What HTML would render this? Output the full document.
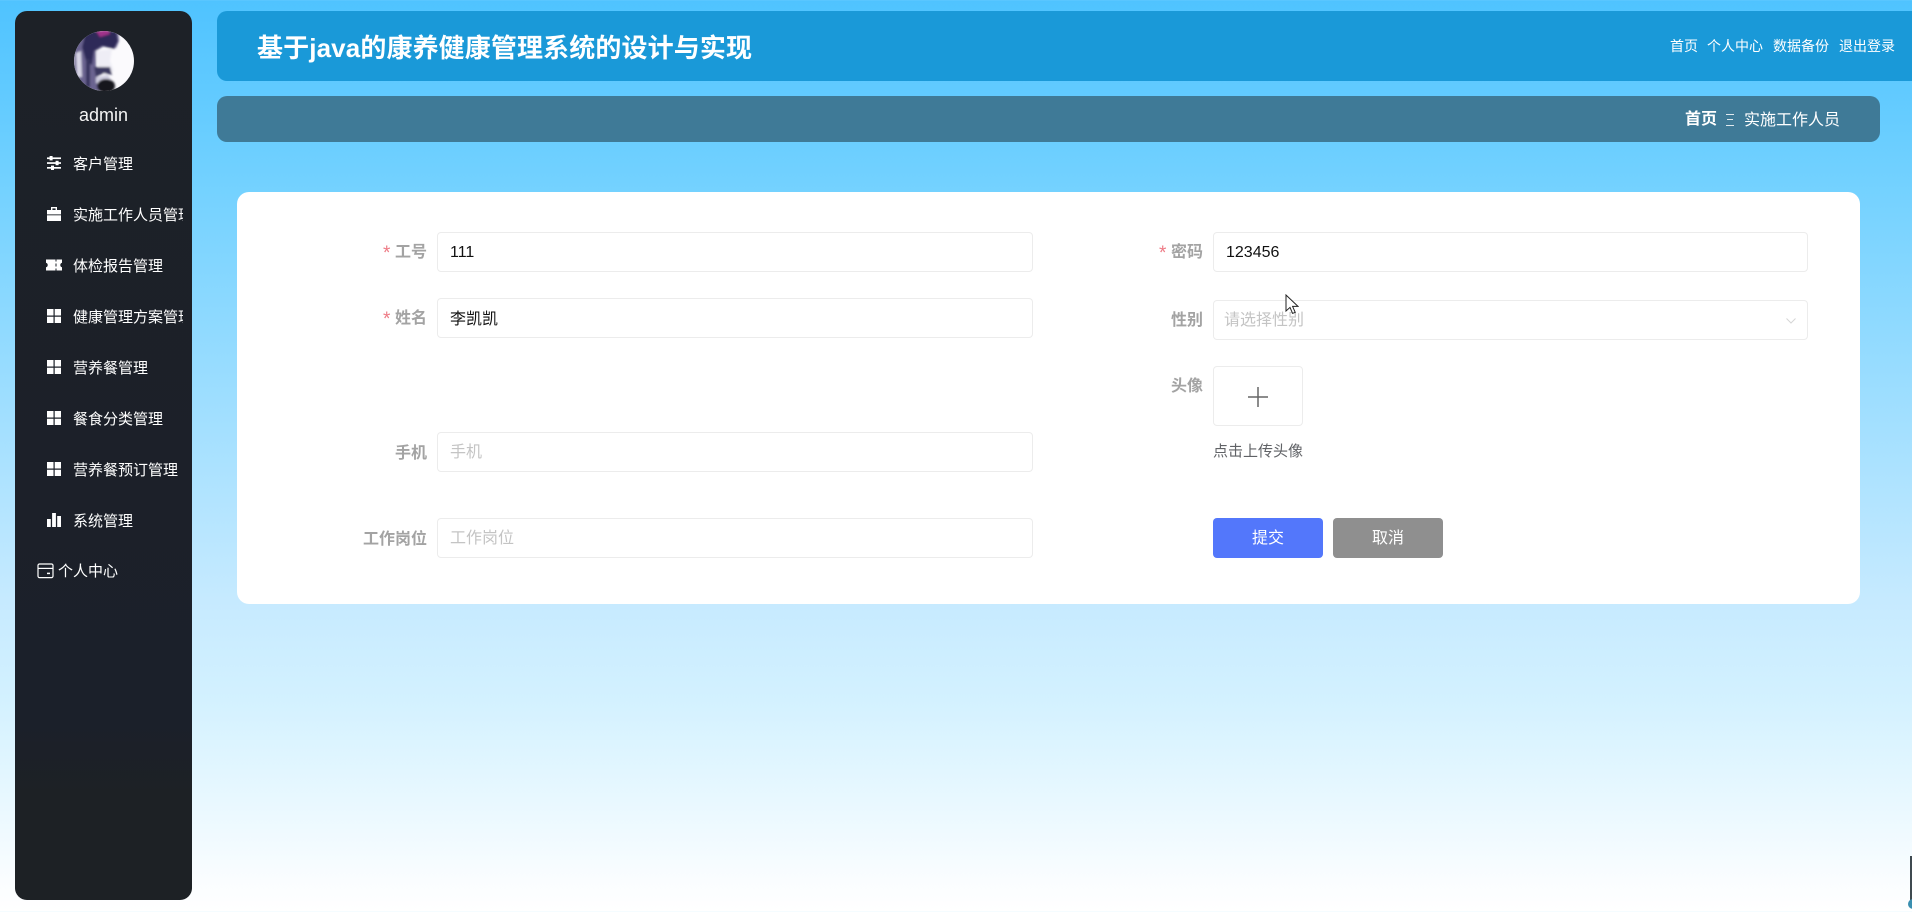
<!DOCTYPE html>
<html lang="zh-CN">
<head>
<meta charset="utf-8">
<title>基于java的康养健康管理系统的设计与实现</title>
<style>
html,body{margin:0;padding:0;width:1912px;height:912px;overflow:hidden;}
body{position:relative;background:linear-gradient(180deg,#4fc3ff 0,#72d1ff 180px,#c6eaff 600px,#d3f1ff 700px,#e8f8ff 800px,#fafdff 880px,#fff 912px);font-family:"Liberation Sans","Noto Sans CJK SC",sans-serif;}
.a{position:absolute;white-space:nowrap;}
#side{left:15px;top:11px;width:177px;height:889px;background:linear-gradient(180deg,#1d2127 0,#1b202a 80%,#1d2125 88%,#1d2125 100%);border-radius:12px;}
.m{position:absolute;left:73px;width:110px;overflow:hidden;color:#fff;font-size:15px;line-height:22px;height:22px;white-space:nowrap;}
.i{position:absolute;left:46px;width:16px;height:16px;}
#hd{left:217px;top:11px;width:1695px;height:70px;background:#1a99d8;border-radius:10px 0 0 10px;}
#bc{left:217px;top:96px;width:1663px;height:46px;background:#3f7a97;border-radius:10px;}
.t{color:#fff;font-size:14px;line-height:20px;top:36px;}
#card{left:237px;top:192px;width:1623px;height:412px;background:#fff;border-radius:12px;}
.l{color:#a3a3a3;font-size:16px;font-weight:bold;line-height:24px;text-align:right;}
.s{color:#ee7a85;font-size:19px;line-height:24px;}
.f{box-sizing:border-box;background:#fff;border:1px solid #ececec;border-radius:4px;height:40px;font-size:16px;line-height:39px;padding-left:12px;color:#111;}
.p{color:#c4c4c4;line-height:40px;}
.b{width:110px;height:40px;border-radius:4px;color:#fff;font-size:16px;line-height:42px;text-align:center;}
</style>
</head>
<body>
<div class="a" id="side"></div>
<svg class="a" style="left:74px;top:31px" width="60" height="60" viewBox="0 0 60 60">
<defs>
<clipPath id="c"><circle cx="30" cy="30" r="30"/></clipPath>
<filter id="bl"><feGaussianBlur stdDeviation="1.1"/></filter>
</defs>
<g clip-path="url(#c)">
<rect width="60" height="60" fill="#fbfafd"/>
<g filter="url(#bl)">
<path d="M0 0H44L45 10 42 17 30 15 22 20 22 36 26 60H0Z" fill="#6a6490"/>
<path d="M12 0H42L44 10 40 18 28 15 20 20 18 34 12 30 8 16Z" fill="#2f2a58"/>
<path d="M22 0 l12 -1 2 4 -10 3Z" fill="#a0308a"/>
<path d="M2 22l5 -2 1 26 -5 0Z" fill="#d8d6e6"/>
<path d="M12 28l4 0 0 28 -4 0Z" fill="#38345e"/>
<path d="M22 20 L38 18 36 30 40 40 30 44 24 36Z" fill="#eeedf5"/>
<path d="M20 36 L36 36 38 44 30 42 22 46Z" fill="#3a3960"/>
<path d="M22 46 L34 44 38 50 28 54 22 52Z" fill="#cfcde0"/>
<ellipse cx="32" cy="55" rx="9" ry="7" fill="#14141e"/>
</g>
</g>
</svg>
<div class="a" style="left:15px;width:177px;top:103px;text-align:center;color:#f4f4f4;font-size:18px;line-height:24px;">admin</div>

<svg class="i" style="top:155px" viewBox="0 0 16 16" fill="#fff"><rect x="1" y="2.4" width="14" height="1.7"/><rect x="1" y="7.2" width="14" height="1.7"/><rect x="1" y="12" width="14" height="1.7"/><rect x="3.6" y="1" width="3" height="4.4"/><rect x="9.6" y="5.8" width="3" height="4.4"/><rect x="5" y="10.6" width="3" height="4.4"/></svg>
<div class="m" style="top:154px">客户管理</div>
<svg class="i" style="top:206px" viewBox="0 0 16 16" fill="#fff"><path d="M5 1h6v3H9.6V2.4H6.4V4H5Z"/><rect x="1" y="4" width="14" height="4.4"/><rect x="1" y="9.3" width="14" height="5.7"/></svg>
<div class="m" style="top:205px">实施工作人员管理</div>
<svg class="i" style="top:257px" viewBox="0 0 16 16" fill="#fff"><path d="M0 2.5h9.5v2h1v-2H16v3.2a2.4 2.4 0 0 0 0 4.6v3.2h-5.5v-2h-1v2H0v-3.2a2.4 2.4 0 0 0 0-4.6ZM9.5 6.5v3h1v-3Z"/></svg>
<div class="m" style="top:256px">体检报告管理</div>
<svg class="i" style="top:308px" viewBox="0 0 16 16" fill="#fff"><path d="M1 1h6.5v6.5H1ZM8.7 1H15v6.5H8.7ZM1 8.7h6.5V15H1ZM8.7 8.7H15V15H8.7Z"/></svg>
<div class="m" style="top:307px">健康管理方案管理</div>
<svg class="i" style="top:359px" viewBox="0 0 16 16" fill="#fff"><path d="M1 1h6.5v6.5H1ZM8.7 1H15v6.5H8.7ZM1 8.7h6.5V15H1ZM8.7 8.7H15V15H8.7Z"/></svg>
<div class="m" style="top:358px">营养餐管理</div>
<svg class="i" style="top:410px" viewBox="0 0 16 16" fill="#fff"><path d="M1 1h6.5v6.5H1ZM8.7 1H15v6.5H8.7ZM1 8.7h6.5V15H1ZM8.7 8.7H15V15H8.7Z"/></svg>
<div class="m" style="top:409px">餐食分类管理</div>
<svg class="i" style="top:461px" viewBox="0 0 16 16" fill="#fff"><path d="M1 1h6.5v6.5H1ZM8.7 1H15v6.5H8.7ZM1 8.7h6.5V15H1ZM8.7 8.7H15V15H8.7Z"/></svg>
<div class="m" style="top:460px">营养餐预订管理</div>
<svg class="i" style="top:512px" viewBox="0 0 16 16" fill="#fff"><rect x="1" y="7" width="3.8" height="8"/><rect x="6.1" y="1" width="3.8" height="14"/><rect x="11.2" y="4" width="3.8" height="11"/></svg>
<div class="m" style="top:511px">系统管理</div>
<svg class="a" style="left:37px;top:563px" width="17" height="16" viewBox="0 0 17 16" fill="none" stroke="#fff" stroke-width="1.2"><rect x="1" y="1" width="15" height="13.6" rx="1.5"/><path d="M1 5.4h15"/><path d="M10 10.4h3" stroke-width="1.5"/></svg>
<div class="m" style="top:561px;left:58px">个人中心</div>

<div class="a" id="hd"></div>
<div class="a" style="left:257px;top:29px;color:#fff;font-size:26px;font-weight:bold;line-height:38px;letter-spacing:.12px;">基于java的康养健康管理系统的设计与实现</div>
<div class="a t" style="left:1670px">首页</div>
<div class="a t" style="left:1707px">个人中心</div>
<div class="a t" style="left:1773px">数据备份</div>
<div class="a t" style="left:1839px">退出登录</div>

<div class="a" id="bc"></div>
<div class="a" style="left:1685px;top:109px;color:#fff;font-size:16px;font-weight:bold;line-height:22px;">首页</div>
<div class="a" style="left:1726px;top:114px;width:8px;height:10px;border-top:1px solid #dfe9ee;border-bottom:1px solid #dfe9ee;"></div>
<div class="a" style="left:1727px;top:119px;width:6px;height:1px;background:#dfe9ee;"></div>
<div class="a" style="left:1744px;top:110px;color:#fff;font-size:16px;line-height:22px;">实施工作人员</div>

<div class="a" id="card"></div>

<div class="a s" style="left:383px;top:242px">*</div>
<div class="a l" style="left:395px;width:32px;top:241px">工号</div>
<div class="a f" style="left:437px;top:232px;width:596px">111</div>

<div class="a s" style="left:383px;top:308px">*</div>
<div class="a l" style="left:395px;width:32px;top:307px">姓名</div>
<div class="a f" style="left:437px;top:298px;width:596px;line-height:41px">李凯凯</div>

<div class="a l" style="left:395px;width:32px;top:442px">手机</div>
<div class="a f p" style="left:437px;top:432px;width:596px">手机</div>

<div class="a l" style="left:347px;width:80px;top:528px">工作岗位</div>
<div class="a f p" style="left:437px;top:518px;width:596px">工作岗位</div>

<div class="a s" style="left:1159px;top:242px">*</div>
<div class="a l" style="left:1171px;width:32px;top:241px">密码</div>
<div class="a f" style="left:1213px;top:232px;width:595px">123456</div>

<div class="a l" style="left:1171px;width:32px;top:309px">性别</div>
<div class="a f p" style="left:1213px;top:300px;width:595px;padding-left:10px">请选择性别</div>
<svg class="a" style="left:1785px;top:317px" width="12" height="8" viewBox="0 0 12 8" fill="none" stroke="#d6d6d6" stroke-width="1"><path d="M1.5 1.5l4.5 4.5 4.5-4.5"/></svg>

<div class="a l" style="left:1171px;width:32px;top:375px">头像</div>
<div class="a" style="left:1213px;top:366px;width:90px;height:60px;box-sizing:border-box;border:1px solid #ececec;border-radius:4px;background:#fff;"></div>
<svg class="a" style="left:1248px;top:387px" width="20" height="20" viewBox="0 0 20 20" fill="none" stroke="#666" stroke-width="1.5"><path d="M10 0v20M0 10h20"/></svg>
<div class="a" style="left:1213px;top:441px;color:#606266;font-size:15px;line-height:22px;">点击上传头像</div>

<div class="a b" style="left:1213px;top:518px;background:#5377fb">提交</div>
<div class="a b" style="left:1333px;top:518px;background:#8f8f8f">取消</div>

<svg class="a" style="left:1285px;top:294px" width="14" height="22" viewBox="0 0 14 22"><path d="M1 1v16l4-3.6 2.6 6 2.6-1.1-2.6-5.9h5.4Z" fill="#fff" stroke="#222" stroke-width="1"/></svg>

<div class="a" style="left:1910px;top:856px;width:2px;height:46px;background:#3f4a50;"></div>
<div class="a" style="left:1908px;top:899px;width:10px;height:10px;border-radius:50%;background:#3a8fb0;"></div>
</body>
</html>
